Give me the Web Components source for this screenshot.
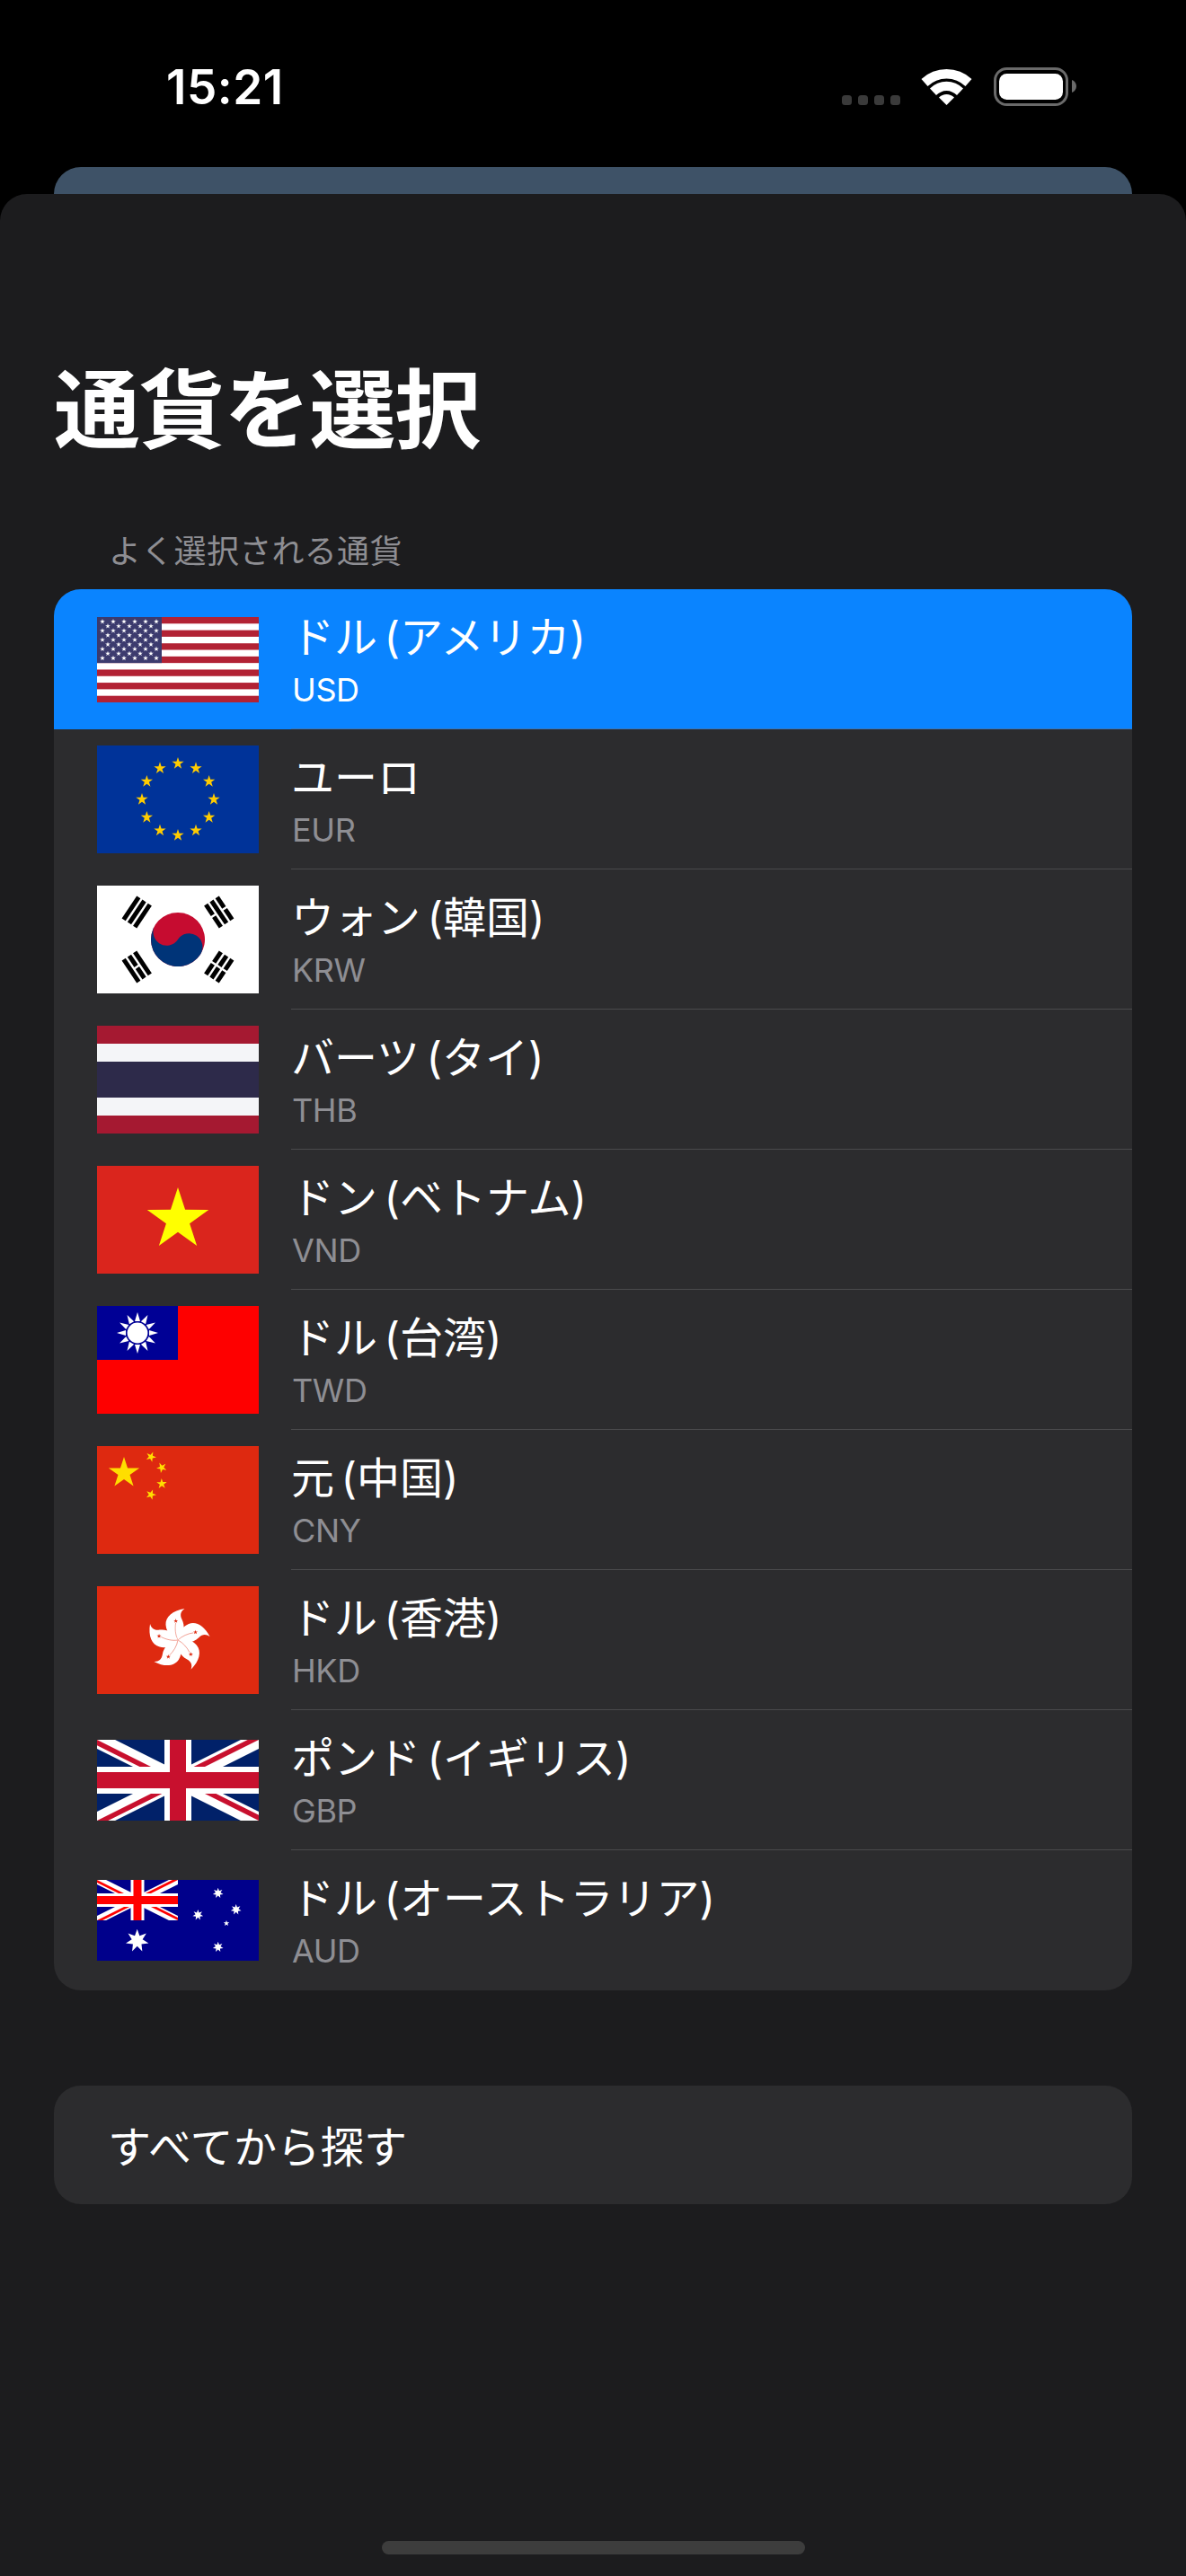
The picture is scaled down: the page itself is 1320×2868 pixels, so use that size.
<!DOCTYPE html>
<html lang="ja">
<head>
<meta charset="utf-8">
<title>通貨を選択</title>
<style>
  html, body { margin: 0; background: #000; }
</style>
</head>
<body>
<app-screen>
  <status-bar slot="status" time="15:21"></status-bar>
  <currency-sheet heading="通貨を選択" label="よく選択される通貨">
    <currency-row code="USD" name="ドル (アメリカ)" selected></currency-row>
    <currency-row code="EUR" name="ユーロ"></currency-row>
    <currency-row code="KRW" name="ウォン (韓国)"></currency-row>
    <currency-row code="THB" name="バーツ (タイ)"></currency-row>
    <currency-row code="VND" name="ドン (ベトナム)"></currency-row>
    <currency-row code="TWD" name="ドル (台湾)"></currency-row>
    <currency-row code="CNY" name="元 (中国)"></currency-row>
    <currency-row code="HKD" name="ドル (香港)"></currency-row>
    <currency-row code="GBP" name="ポンド (イギリス)"></currency-row>
    <currency-row code="AUD" name="ドル (オーストラリア)" last></currency-row>
    <search-button slot="after">すべてから探す</search-button>
  </currency-sheet>
</app-screen>

<script>
const FONT = `Inter, "Noto Sans CJK JP", sans-serif`;

// n-pointed star as polygon points
function star(cx, cy, r, n = 5, inner = 0.382, rot = 0) {
  const pts = [];
  for (let i = 0; i < n * 2; i++) {
    const rad = i % 2 ? r * inner : r;
    const a = rot + (Math.PI * i) / n - Math.PI / 2;
    pts.push((cx + rad * Math.cos(a)).toFixed(2) + ',' + (cy + rad * Math.sin(a)).toFixed(2));
  }
  return pts.join(' ');
}

function starEl(cx, cy, r, fill, n, inner, rot) {
  return `<polygon points="${star(cx, cy, r, n, inner, rot)}" fill="${fill}"/>`;
}

// union jack used by GBP and AUD, w/h in px of the flag box
function unionJack(w, h, c) {
  const diag = `M0,0L${w},${h}M${w},0L0,${h}`;
  const cw = w / 2, ch = h / 2;
  const clip = `M${cw},${ch}H${w}V${h}ZV${h}H0ZH0V0ZV0H${w}Z`;
  return `
    <clipPath id="t"><path d="${clip}"/></clipPath>
    <rect width="${w}" height="${h}" fill="${c.blue}"/>
    <path d="${diag}" stroke="#fff" stroke-width="${c.dw}"/>
    <path d="${diag}" stroke="${c.red}" stroke-width="${c.dr}" clip-path="url(#t)"/>
    <path d="M${cw},0V${h}M0,${ch}H${w}" stroke="#fff" stroke-width="${c.w}"/>
    <path d="M${cw},0V${h}M0,${ch}H${w}" stroke="${c.red}" stroke-width="${c.r}"/>`;
}

const FLAGS = {
  USD: { h: 95, draw() {
    let s = '<rect width="180" height="95" fill="#fff"/>';
    const u = 95 / 13;
    for (let i = 0; i < 13; i += 2) s += `<rect y="${i * u}" width="180" height="${u}" fill="#b22234"/>`;
    s += `<rect width="72" height="${u * 7}" fill="#3c3b6e"/>`;
    for (let r = 0; r < 9; r++) {
      const n = r % 2 ? 5 : 6;
      for (let c = 0; c < n; c++) {
        s += starEl(6 + c * 12 + (r % 2 ? 6 : 0), 5 + r * 5.1, 3, '#fff');
      }
    }
    return s;
  }},
  EUR: { h: 120, draw() {
    let s = '<rect width="180" height="120" fill="#039"/>';
    for (let i = 0; i < 12; i++) {
      const a = (i * Math.PI) / 6;
      s += starEl(90 + 40 * Math.sin(a), 60 - 40 * Math.cos(a), 7, '#fc0');
    }
    return s;
  }},
  KRW: { h: 120, draw() {
    const bars = (list) => list.map(([y, x1, x2]) => `<path d="M${x1},${y}H${x2}" stroke="#000" stroke-width="5"/>`).join('');
    const full = [-62.5, -55, -47.5];
    const side = (ys, broken) => ys.map((y, i) => broken[i]
      ? bars([[y, -15, -1.2], [y, 1.2, 15]])
      : bars([[y, -15, 15]])).join('');
    return `<rect width="180" height="120" fill="#fff"/>
      <g transform="translate(90 60)">
        <g transform="rotate(-56.31)">
          ${side(full, [0, 0, 0])}
          ${side([47.5, 55, 62.5], [1, 1, 1])}
          <circle r="30" fill="#c60c30"/>
          <path d="M0,-30A15,15 0 0 0 0,0A15,15 0 0 1 0,30A30,30 0 0 1 0,-30Z" fill="#003478"/>
        </g>
        <g transform="rotate(-123.69)">
          ${side(full, [0, 1, 0])}
          ${side([47.5, 55, 62.5], [1, 0, 1])}
        </g>
      </g>`;
  }},
  THB: { h: 120, draw() {
    return `<rect width="180" height="120" fill="#a51931"/>
      <rect y="20" width="180" height="80" fill="#f4f5f8"/>
      <rect y="40" width="180" height="40" fill="#2d2a4a"/>`;
  }},
  VND: { h: 120, draw() {
    return `<rect width="180" height="120" fill="#da251d"/>` + starEl(90, 60, 36, '#ff0');
  }},
  TWD: { h: 120, draw() {
    let rays = '';
    for (let i = 0; i < 12; i++) {
      rays += `<path d="M-3,-13L0,-23L3,-13Z" fill="#fff" transform="translate(45 30) rotate(${i * 30})"/>`;
    }
    return `<rect width="180" height="120" fill="#fe0000"/>
      <rect width="90" height="60" fill="#000095"/>
      ${rays}
      <circle cx="45" cy="30" r="11.4" fill="#fff"/>`;
  }},
  CNY: { h: 120, draw() {
    let s = '<rect width="180" height="120" fill="#de2910"/>';
    s += starEl(30, 30, 18, '#ffde00');
    [[60, 12], [72, 24], [72, 42], [60, 54]].forEach(([x, y]) => {
      const rot = Math.atan2(30 - y, 30 - x) + Math.PI / 2;
      s += starEl(x, y, 6, '#ffde00', 5, 0.382, rot);
    });
    return s;
  }},
  HKD: { h: 120, draw() {
    const petal = `
      <path d="M0,0C-4,-1 -13,-7 -13.5,-17C-14,-26 -6,-33 7.5,-35C3,-32 2,-28 4.5,-23C8,-16 7.5,-7 0,0Z" fill="#fff"/>
      <path d="M0,0C-3,-6 -3.4,-13 -2.4,-19" fill="none" stroke="#de2a10" stroke-width=".4"/>
      ${starEl(-2.3, -21.3, 2.6, '#de2a10')}`;
    let s = '<rect width="180" height="120" fill="#de2a10"/><g transform="translate(90 60)">';
    for (let i = 0; i < 5; i++) s += `<g transform="rotate(${i * 72})">${petal}</g>`;
    return s + '</g>';
  }},
  GBP: { h: 90, draw() {
    return unionJack(180, 90, { blue: '#012169', red: '#c8102e', dw: 18, dr: 11, w: 30, r: 18 });
  }},
  AUD: { h: 90, draw() {
    const w = '#fff';
    return `<rect width="180" height="90" fill="#00008b"/>
      <svg width="90" height="45" viewBox="0 0 90 45">
        ${unionJack(90, 45, { blue: '#00008b', red: '#f00', dw: 9, dr: 5.5, w: 15, r: 9 })}
      </svg>
      ${starEl(44.7, 67.7, 13, w, 7, 0.47)}
      ${starEl(134.7, 14.7, 6, w, 7, 0.47)}
      ${starEl(154.7, 33, 6, w, 7, 0.47)}
      ${starEl(112.3, 39, 6, w, 7, 0.47)}
      ${starEl(144, 48.3, 3.4, w, 5, 0.42)}
      ${starEl(134.7, 74.7, 6, w, 7, 0.47)}`;
  }}
};

class AppScreen extends HTMLElement {
  connectedCallback() {
    this.attachShadow({ mode: 'open' }).innerHTML = `
      <style>
        :host { display: flex; flex-direction: column; width: 1320px; height: 2868px; background: #000; overflow: hidden; }
        .peek { flex: none; height: 30px; margin: 0 60px; background: #3e5267; border-radius: 30px 30px 0 0; }
      </style>
      <slot name="status"></slot>
      <div class="peek"></div>
      <slot></slot>`;
  }
}

class StatusBar extends HTMLElement {
  connectedCallback() {
    this.attachShadow({ mode: 'open' }).innerHTML = `
      <style>
        :host { display: flex; flex: none; height: 186px; box-sizing: border-box; padding: 75px 122px 0 185px; justify-content: space-between; align-items: flex-start; font-family: ${FONT}; color: #fff; }
        .time { font-size: 53px; font-weight: 600; line-height: 44px; letter-spacing: .5px; }
        .icons { display: flex; align-items: flex-start; }
        .dots { display: flex; gap: 7px; margin: 31px 23px 0 0; }
        .dots i { width: 11px; height: 11px; border-radius: 3.5px; background: #3a3a3a; }
        svg { display: block; }
        .wifi { margin-right: 24px; }
      </style>
      <span class="time">${this.getAttribute('time')}</span>
      <div class="icons">
        <div class="dots"><i></i><i></i><i></i><i></i></div>
        <svg class="wifi" width="57" height="42" viewBox="0 0 57 42" fill="#fff">
          <path d="M0.5,13A41,41 0 0 1 56.5,13L49.5,21A30,30 0 0 0 7.5,21Z"/>
          <path d="M10,23.5A26,26 0 0 1 47,23.5L40,31A16,16 0 0 0 17,31Z"/>
          <path d="M20,33.5A12,12 0 0 1 37,33.5L28.5,42Z"/>
        </svg>
        <svg width="92" height="43" viewBox="0 0 92 43">
          <rect x="1.5" y="1.5" width="80" height="40" rx="13" fill="none" stroke="#6a6a6a" stroke-width="3"/>
          <rect x="6" y="7" width="71" height="29" rx="8.5" fill="#fff"/>
          <path d="M87,14C90,15 92,18 92,21S90,27 87,28Z" fill="#6a6a6a"/>
        </svg>
      </div>`;
  }
}

class CurrencySheet extends HTMLElement {
  connectedCallback() {
    this.attachShadow({ mode: 'open' }).innerHTML = `
      <style>
        :host { display: flex; flex: 1; flex-direction: column; background: #1c1c1e; border-radius: 30px 30px 0 0; padding: 0 60px; font-family: ${FONT}; color: #fff; }
        h1 { margin: 172px 0 0; font-size: 96px; line-height: 136px; font-weight: 700; letter-spacing: -1.2px; }
        .label { margin: 66px 0 0 61px; font-size: 36px; line-height: 48px; letter-spacing: .3px; color: #8e8e93; }
        .list { margin-top: 18px; border-radius: 30px; overflow: hidden; background: #2c2c2e; }
        .after { margin-top: 106px; }
        .home { margin: auto auto 24px; width: 471px; height: 15px; border-radius: 8px; background: #3d3d3d; }
      </style>
      <h1>${this.getAttribute('heading')}</h1>
      <div class="label">${this.getAttribute('label')}</div>
      <div class="list"><slot></slot></div>
      <div class="after"><slot name="after"></slot></div>
      <div class="home"></div>`;
  }
}

class CurrencyFlag extends HTMLElement {
  connectedCallback() {
    const f = FLAGS[this.getAttribute('code')];
    this.attachShadow({ mode: 'open' }).innerHTML = `
      <style>
        :host { display: block; flex: none; width: 180px; height: ${f.h}px; }
        svg { display: block; }
      </style>
      <svg width="180" height="${f.h}" viewBox="0 0 180 ${f.h}">${f.draw()}</svg>`;
  }
}

class CurrencyRow extends HTMLElement {
  connectedCallback() {
    const last = this.hasAttribute('last');
    const selected = this.hasAttribute('selected');
    this.attachShadow({ mode: 'open' }).innerHTML = `
      <style>
        :host { display: flex; align-items: center; height: 156px; box-sizing: border-box; padding-left: 48px; gap: 36px; background: ${selected ? '#0a84ff' : 'transparent'}; color: #fff; }
        .text { flex: 1; align-self: stretch; display: flex; flex-direction: column; padding-top: 20px; box-sizing: border-box; ${last ? '' : 'border-bottom: 1px solid ' + (selected ? '#3a76b8' : '#4a4a4c') + ';'} }
        .name { font-size: 48px; line-height: 68px; word-spacing: -6px; }
        .code { font-size: 36px; line-height: 44px; margin: 2px 0 0 1px; letter-spacing: -.4px; color: ${selected ? '#fff' : '#8e8e93'}; }
      </style>
      <currency-flag code="${this.getAttribute('code')}"></currency-flag>
      <div class="text">
        <span class="name">${this.getAttribute('name')}</span>
        <span class="code">${this.getAttribute('code')}</span>
      </div>`;
  }
}

class SearchButton extends HTMLElement {
  connectedCallback() {
    this.attachShadow({ mode: 'open' }).innerHTML = `
      <style>
        :host { display: flex; align-items: center; box-sizing: border-box; height: 132px; padding: 0 0 3px 60px; border-radius: 30px; background: #2c2c2e; font-size: 48px; letter-spacing: .4px; color: #fff; }
      </style>
      <slot></slot>`;
  }
}

customElements.define('currency-flag', CurrencyFlag);
customElements.define('currency-row', CurrencyRow);
customElements.define('search-button', SearchButton);
customElements.define('currency-sheet', CurrencySheet);
customElements.define('status-bar', StatusBar);
customElements.define('app-screen', AppScreen);
</script>
</body>
</html>
